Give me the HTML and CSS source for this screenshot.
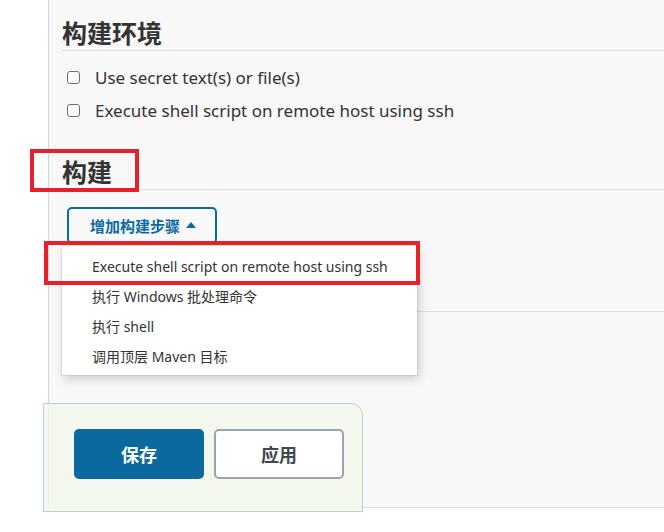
FILE: index.html
```html
<!DOCTYPE html>
<html lang="zh">
<head>
<meta charset="utf-8">
<title>构建</title>
<link rel="stylesheet" href="styles.css">
</head>
<body>
<div class="page">
  <div class="gutter"></div>
  <main class="main">
    <h2 class="section-title">构建环境</h2>
    <div class="checks">
      <label class="check-row"><span class="box"></span><span>Use secret text(s) or file(s)</span></label>
      <label class="check-row"><span class="box"></span><span>Execute shell script on remote host using ssh</span></label>
    </div>
    <h2 class="section-title second">构建</h2>
    <div class="add-wrap">
      <button class="add-btn">增加构建步骤 <span class="caret"></span></button>
      <ul class="menu">
        <li>Execute shell script on remote host using ssh</li>
        <li>执行 Windows 批处理命令</li>
        <li>执行 shell</li>
        <li>调用顶层 Maven 目标</li>
      </ul>
    </div>
    <div class="section-divider"></div>
  </main>
  <div class="mark mark-title"></div>
  <div class="mark mark-item"></div>
  <div class="bottom-bar">
    <button class="btn btn-save">保存</button>
    <button class="btn btn-apply">应用</button>
  </div>
</div>
</body>
</html>
```
FILE: styles.css
```css
html, body {
  margin: 0;
  padding: 0;
  background: #ffffff;
  font-family: "Noto Sans", "Noto Sans CJK SC", sans-serif;
  color: #333333;
}

.page {
  position: relative;
  display: flex;
  width: 664px;
  height: 532px;
  overflow: hidden;
}

.gutter {
  width: 48px;
  flex: none;
}

.main {
  flex: 1;
  box-sizing: border-box;
  height: 508px;
  background: #f8f8f8;
  border-left: 1px solid #d4d4d4;
  border-bottom: 1px solid #dddddd;
  padding: 16px 0 0 13px;
}

.section-title {
  margin: 0;
  font-family: "Noto Sans CJK SC", sans-serif;
  font-size: 25px;
  line-height: 32px;
  font-weight: 700;
  color: #333333;
  padding-bottom: 2px;
  border-bottom: 1px solid #dddddd;
}

.section-title.second {
  margin-top: 28px;
}

.section-divider {
  margin-top: 67px;
  border-bottom: 1px solid #dddddd;
}

.checks {
  margin-top: 10px;
  display: flex;
  flex-direction: column;
}

.check-row {
  display: flex;
  align-items: center;
  height: 33px;
  padding-left: 5px;
  gap: 15px;
  font-size: 17px;
  color: #333333;
}

.box {
  width: 11px;
  height: 11px;
  border: 1.5px solid #6f6f6f;
  border-radius: 3px;
  background: #ffffff;
  flex: none;
}

.add-wrap {
  position: relative;
  margin-top: 17px;
  padding-left: 5px;
}

.add-btn {
  box-sizing: border-box;
  height: 37px;
  padding: 0 19px 0 21px;
  border: 2px solid #0b6aa2;
  border-radius: 5px;
  background: transparent;
  color: #0b6aa2;
  font-family: "Noto Sans CJK SC", sans-serif;
  font-size: 15px;
  font-weight: 600;
  display: inline-flex;
  align-items: center;
  gap: 6px;
}

.caret {
  width: 0;
  height: 0;
  border-left: 5px solid transparent;
  border-right: 5px solid transparent;
  border-bottom: 6px solid #0b6aa2;
  margin-top: -2px;
}

.menu {
  position: absolute;
  left: 0;
  top: 39px;
  width: 355px;
  margin: 0;
  padding: 6px 0 3px;
  list-style: none;
  background: #ffffff;
  box-shadow: 0 0 0 1px rgba(0, 0, 0, 0.07), 2px 4px 10px rgba(0, 0, 0, 0.18);
  z-index: 2;
}

.menu li {
  height: 30px;
  line-height: 30px;
  padding-left: 30px;
  font-size: 14px;
  color: #333333;
  white-space: nowrap;
}

.mark {
  position: absolute;
  box-sizing: border-box;
  border: 4px solid #e8202a;
  z-index: 3;
}

.mark-title {
  left: 30px;
  top: 149px;
  width: 109px;
  height: 43px;
}

.mark-item {
  left: 44px;
  top: 241px;
  width: 376px;
  height: 44px;
}

.bottom-bar {
  position: absolute;
  left: 43px;
  top: 403px;
  width: 320px;
  height: 109px;
  box-sizing: border-box;
  background: rgba(243, 246, 236, 0.82);
  border: 1px solid #b6d4c2;
  border-top-right-radius: 12px;
  padding: 25px 0 0 30px;
  display: flex;
  gap: 10px;
  z-index: 4;
}

.btn {
  box-sizing: border-box;
  width: 130px;
  height: 50px;
  border-radius: 5px;
  font-family: "Noto Sans CJK SC", sans-serif;
  font-size: 18px;
  font-weight: 700;
}

.btn-save {
  background: #0b69a0;
  border: none;
  color: #ffffff;
}

.btn-apply {
  background: #ffffff;
  border: 2px solid #9aa4ad;
  color: #41474e;
}
```
